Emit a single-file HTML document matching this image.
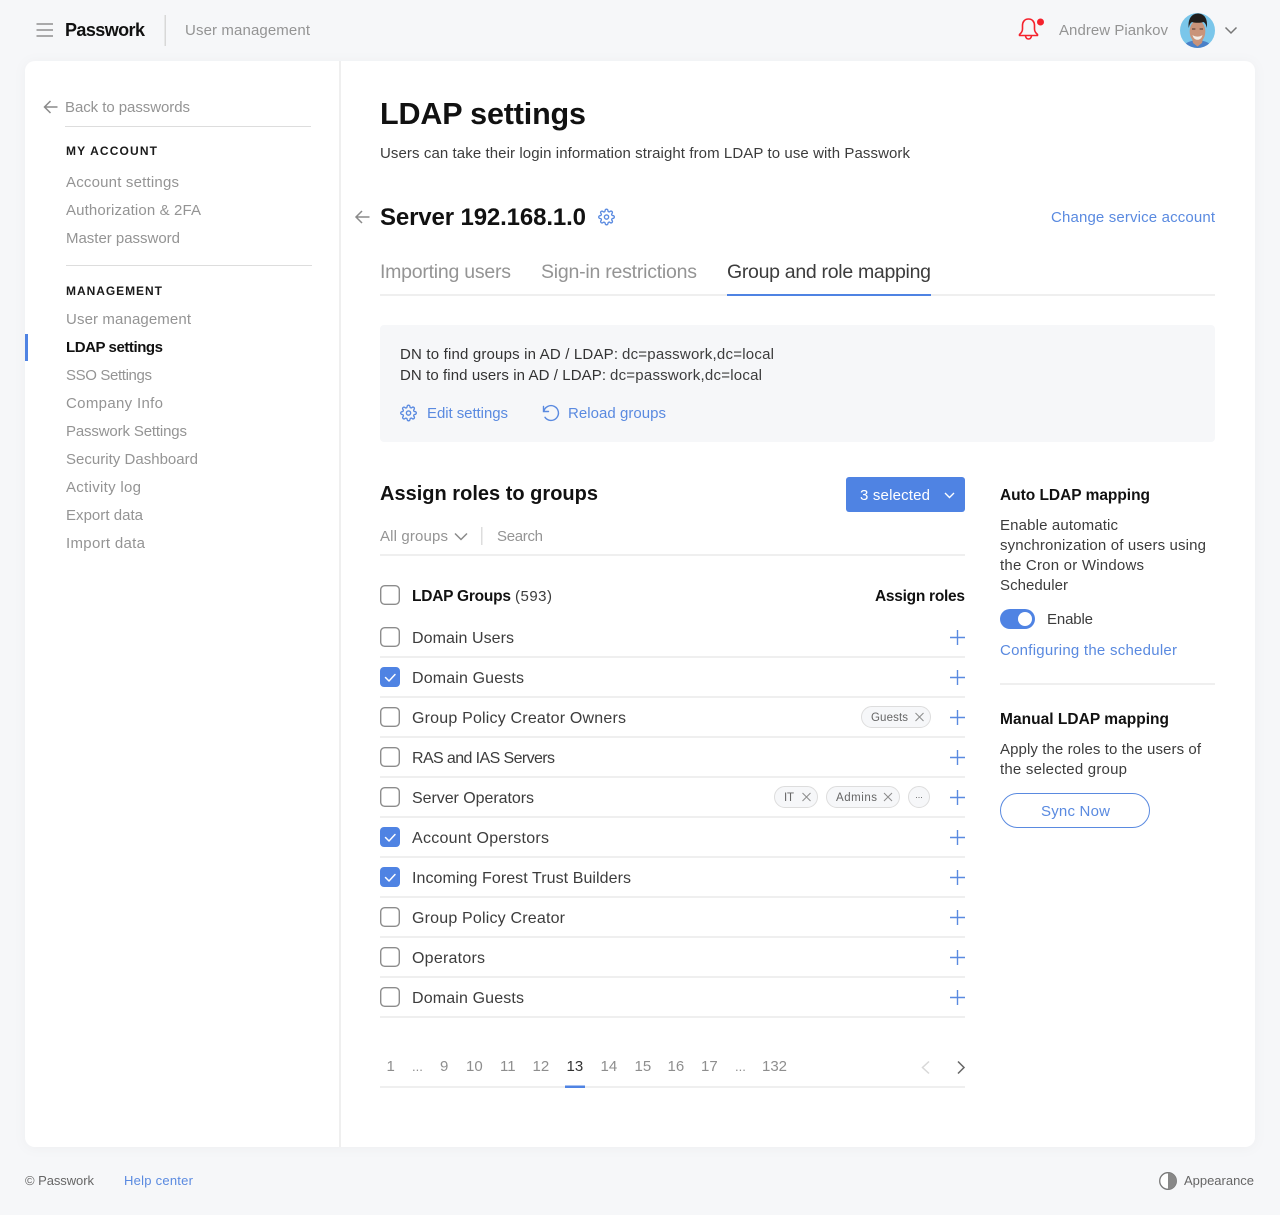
<!DOCTYPE html>
<html lang="en"><head><meta charset="utf-8"><title>LDAP settings</title>
<style>
html,body{margin:0;padding:0;background:#f6f7f9;width:1280px;height:1215px;overflow:hidden}
svg{display:block}
text{font-family:"Liberation Sans",sans-serif;font-size:15px;fill:#333;white-space:pre}
.g{fill:#949494}
.d{fill:#3c3c3c}
.r{fill:#3c3c3c;font-size:16px}
.b{fill:#5a8ae0}
.k{fill:#111;font-weight:700}
.h{fill:#1a1a1a;font-weight:700;font-size:12px}
.p{font-size:15px;fill:#8e8e8e}
.e{font-size:13px;fill:#8e8e8e}
.t{font-size:19.5px;fill:#949494}
.line{fill:#efefef}
.ic{fill:none;stroke:#5a8ae0;stroke-width:1.9;stroke-linecap:round;stroke-linejoin:round}
.plus{stroke:#5a8ae0;stroke-width:1.4;fill:none}
.cb{fill:#fff;stroke:#8c8c8c;stroke-width:1.4}
.cc{fill:#4f83e3}
.ck{fill:none;stroke:#fff;stroke-width:1.5;stroke-linecap:round;stroke-linejoin:round}
.chip{fill:#f6f7f9;stroke:#ddd;stroke-width:1}
.x{stroke:#8c8c8c;stroke-width:1;fill:none}
.c{font-size:11.5px;fill:#666}
</style></head><body>
<svg width="1280" height="1215" viewBox="0 0 1280 1215" xmlns="http://www.w3.org/2000/svg">
<defs>
<filter id="sh" x="-5%" y="-5%" width="110%" height="110%"><feDropShadow dx="0" dy="1" stdDeviation="6" flood-color="#000" flood-opacity=".035"/></filter>
<path id="gear" d="M19.4 15a1.65 1.65 0 0 0 .33 1.82l.06.06a2 2 0 0 1 0 2.83 2 2 0 0 1-2.83 0l-.06-.06a1.65 1.65 0 0 0-1.82-.33 1.65 1.65 0 0 0-1 1.51V21a2 2 0 0 1-2 2 2 2 0 0 1-2-2v-.09A1.65 1.65 0 0 0 9 19.4a1.65 1.65 0 0 0-1.82.33l-.06.06a2 2 0 0 1-2.83 0 2 2 0 0 1 0-2.83l.06-.06a1.65 1.65 0 0 0 .33-1.82 1.65 1.65 0 0 0-1.51-1H3a2 2 0 0 1-2-2 2 2 0 0 1 2-2h.09A1.65 1.65 0 0 0 4.6 9a1.65 1.65 0 0 0-.33-1.82l-.06-.06a2 2 0 0 1 0-2.83 2 2 0 0 1 2.83 0l.06.06a1.65 1.65 0 0 0 1.82.33H9a1.65 1.65 0 0 0 1-1.51V3a2 2 0 0 1 2-2 2 2 0 0 1 2 2v.09a1.65 1.65 0 0 0 1 1.51 1.65 1.65 0 0 0 1.82-.33l.06-.06a2 2 0 0 1 2.83 0 2 2 0 0 1 0 2.83l-.06.06a1.65 1.65 0 0 0-.33 1.82V9a1.65 1.65 0 0 0 1.51 1H21a2 2 0 0 1 2 2 2 2 0 0 1-2 2h-.09a1.65 1.65 0 0 0-1.51 1z"/>
<clipPath id="av"><circle cx="1197.5" cy="30.5" r="17.5"/></clipPath>
</defs>

<rect width="1280" height="1215" fill="#f6f7f9"/>

<!-- top bar -->
<g stroke="#8f8f8f" stroke-width="1.5" fill="none"><path d="M36.500 24H53M36.500 30H53M36.500 36H53"/></g>
<text x="65" y="36" style="font-size:18px;fill:#111;font-weight:700" textLength="80" lengthAdjust="spacing">Passwork</text>
<rect x="164.500" y="15" width="1.500" height="31" fill="#d8d8d8"/>
<text x="185" y="35" class="g" textLength="125" lengthAdjust="spacing">User management</text>
<path d="M1028.500 19.500c-4 0-6 3-6 6.500v3.500c0 2.500-1.200 4-3 5.500v1h18v-1c-1.800-1.500-3-3-3-5.500V26c0-3.500-2-6.500-6-6.500zM1025.500 36.500c.4 2 1.500 3 3 3s2.600-1 3-3" transform="translate(0 -.5)" fill="none" stroke="#f5222d" stroke-width="1.600" stroke-linejoin="round"/>
<circle cx="1040.500" cy="22" r="3.500" fill="#f5222d"/>
<text x="1059" y="35" class="g" textLength="109" lengthAdjust="spacing">Andrew Piankov</text>
<g clip-path="url(#av)">
<rect x="1178" y="11" width="40" height="40" fill="#7ac6ea"/>
<path d="M1183 49c1-6 6-8.500 14.500-8.500s13.500 2.500 14.500 8.500z" fill="#4a80c8"/>
<path d="M1192 38h11l-1 5-4.500 3.500-4.500-3.500z" fill="#c99278"/>
<ellipse cx="1197.500" cy="31.500" rx="7.800" ry="11" fill="#c9947a"/>
<path d="M1188.800 28c-1.300-9 3-14.500 9-14.500s10.300 4.500 9 14.500c-.6-3-1.500-5-3.300-6-3.500 1-8 1-11.500 0-1.800 1-2.800 3-3.200 6z" fill="#211e1c"/>
<path d="M1192.500 35c3 2.200 7 2.200 10 0-.7 3.300-2.800 4.800-5 4.800s-4.300-1.500-5-4.800z" fill="#f4eee8"/>
<path d="M1192 29h3.400M1199.600 29h3.400" stroke="#4a352b" stroke-width="1"/>
</g>
<path d="M1225.500 27.500l5.500 5.500 5.500-5.500" fill="none" stroke="#777" stroke-width="1.500"/>

<!-- card -->
<rect x="25" y="61" width="1230" height="1086" rx="10" fill="#fff" filter="url(#sh)"/>
<rect x="339" y="61" width="2" height="1086" fill="#efefef"/>

<!-- sidebar -->
<path d="M57.500 107H45M50.500 101l-6 6 6 6" fill="none" stroke="#8a8a8a" stroke-width="1.500"/>
<text x="65" y="112" class="g" textLength="125" lengthAdjust="spacing">Back to passwords</text>
<rect x="65" y="126" width="246" height="1" fill="#ddd"/>
<text x="66" y="155" class="h" textLength="91" lengthAdjust="spacing">MY ACCOUNT</text>
<text x="66" y="187" class="g" textLength="113" lengthAdjust="spacing">Account settings</text>
<text x="66" y="215" class="g" textLength="135" lengthAdjust="spacing">Authorization &amp; 2FA</text>
<text x="66" y="243" class="g" textLength="114" lengthAdjust="spacing">Master password</text>
<rect x="66" y="265" width="246" height="1" fill="#ddd"/>
<text x="66" y="295" class="h" textLength="96" lengthAdjust="spacing">MANAGEMENT</text>
<text x="66" y="324" class="g" textLength="125" lengthAdjust="spacing">User management</text>
<rect x="25" y="334" width="3" height="27" fill="#4f83e3"/>
<text x="66" y="352" class="k" textLength="97" lengthAdjust="spacing">LDAP settings</text>
<text x="66" y="380" class="g" textLength="86" lengthAdjust="spacing">SSO Settings</text>
<text x="66" y="408" class="g" textLength="97" lengthAdjust="spacing">Company Info</text>
<text x="66" y="436" class="g" textLength="121" lengthAdjust="spacing">Passwork Settings</text>
<text x="66" y="464" class="g" textLength="132" lengthAdjust="spacing">Security Dashboard</text>
<text x="66" y="492" class="g" textLength="75" lengthAdjust="spacing">Activity log</text>
<text x="66" y="520" class="g" textLength="77" lengthAdjust="spacing">Export data</text>
<text x="66" y="548" class="g" textLength="79" lengthAdjust="spacing">Import data</text>

<!-- heading -->
<text x="380" y="124" style="font-size:30.500px;fill:#111;font-weight:700" textLength="206" lengthAdjust="spacing">LDAP settings</text>
<text x="380" y="158" class="d" textLength="530" lengthAdjust="spacing">Users can take their login information straight from LDAP to use with Passwork</text>
<path d="M369.500 217H356M362 211l-6 6 6 6" fill="none" stroke="#8a8a8a" stroke-width="1.500"/>
<text x="380" y="225" style="font-size:24px;fill:#111;font-weight:700" textLength="206" lengthAdjust="spacing">Server 192.168.1.0</text>
<g transform="translate(598 208.500) scale(.71)"><use href="#gear" class="ic"/><circle cx="12" cy="12" r="3" class="ic"/></g>
<text x="1051" y="222" class="b" textLength="164" lengthAdjust="spacing">Change service account</text>

<!-- tabs -->
<text x="380" y="278" class="t" textLength="131" lengthAdjust="spacing">Importing users</text>
<text x="541" y="278" class="t" textLength="156" lengthAdjust="spacing">Sign-in restrictions</text>
<text x="727" y="278" class="t" style="fill:#3c3c3c" textLength="204" lengthAdjust="spacing">Group and role mapping</text>
<rect x="380" y="294" width="835" height="2" class="line"/>
<rect x="727" y="294" width="204" height="2" fill="#4f83e3"/>

<!-- info panel -->
<rect x="380" y="325" width="835" height="117" rx="4" fill="#f6f7f9"/>
<text x="400" y="359" style="fill:#333" textLength="218" lengthAdjust="spacing">DN to find groups in AD / LDAP:</text>
<text x="622" y="359" class="d" textLength="152" lengthAdjust="spacing">dc=passwork,dc=local</text>
<text x="400" y="380" style="fill:#333" textLength="206" lengthAdjust="spacing">DN to find users in AD / LDAP:</text>
<text x="610" y="380" class="d" textLength="152" lengthAdjust="spacing">dc=passwork,dc=local</text>
<g transform="translate(400 404.500) scale(.71)"><use href="#gear" class="ic"/><circle cx="12" cy="12" r="3" class="ic"/></g>
<text x="427" y="418" class="b" textLength="81" lengthAdjust="spacing">Edit settings</text>
<path d="M543.500 406v5h5M543.800 411a7.400 7.400 0 1 1 1.200 5.800" transform="translate(0 .5)" fill="none" stroke="#5a8ae0" stroke-width="1.400" stroke-linecap="round"/>
<text x="568" y="418" class="b" textLength="98" lengthAdjust="spacing">Reload groups</text>

<!-- assign -->
<text x="380" y="500" style="font-size:20px;fill:#111;font-weight:700" textLength="218" lengthAdjust="spacing">Assign roles to groups</text>
<rect x="846" y="477" width="119" height="35" rx="3" fill="#4f83e3"/>
<text x="860" y="500" style="fill:#fff" textLength="70" lengthAdjust="spacing">3 selected</text>
<path d="M945 493l4.500 4.500 4.500-4.500" fill="none" stroke="#fff" stroke-width="1.400"/>
<text x="380" y="541" class="g" textLength="68" lengthAdjust="spacing">All groups</text>
<path d="M455 533.500l6 6 6-6" fill="none" stroke="#8a8a8a" stroke-width="1.500"/>
<rect x="481" y="527" width="1.500" height="18" fill="#ddd"/>
<text x="497" y="541" class="g" textLength="46" lengthAdjust="spacing">Search</text>
<rect x="380" y="554" width="585" height="2" class="line"/>

<rect x="380.700" y="585.700" width="18.600" height="18.600" rx="4" class="cb"/>
<text x="412" y="601" class="k" style="font-size:15.500px" textLength="99" lengthAdjust="spacing">LDAP Groups</text>
<text x="515" y="601" class="d" textLength="37" lengthAdjust="spacing">(593)</text>
<text x="875" y="601" class="k" style="font-size:15.500px" textLength="90" lengthAdjust="spacing">Assign roles</text>

<!-- rows -->
<rect x="380.700" y="627.700" width="18.600" height="18.600" rx="4" class="cb"/>
<text x="412" y="643" class="r" textLength="102" lengthAdjust="spacing">Domain Users</text>
<path class="plus" d="M950 637.500h15M957.500 630v15"/><rect x="380" y="656" width="585" height="2" class="line"/>

<rect x="380" y="667" width="20" height="20" rx="4" class="cc"/><path class="ck" d="M385.500 677.500l3.500 3.500 6-6.500"/>
<text x="412" y="683" class="r" textLength="112" lengthAdjust="spacing">Domain Guests</text>
<path class="plus" d="M950 677.500h15M957.500 670v15"/><rect x="380" y="696" width="585" height="2" class="line"/>

<rect x="380.700" y="707.700" width="18.600" height="18.600" rx="4" class="cb"/>
<text x="412" y="723" class="r" textLength="214" lengthAdjust="spacing">Group Policy Creator Owners</text>
<rect x="861.500" y="706.500" width="69" height="21" rx="10.500" class="chip"/>
<text x="871" y="721" class="c" textLength="37" lengthAdjust="spacing">Guests</text>
<path class="x" d="M915.500 713l8 8M923.500 713l-8 8"/>
<path class="plus" d="M950 717.500h15M957.500 710v15"/><rect x="380" y="736" width="585" height="2" class="line"/>

<rect x="380.700" y="747.700" width="18.600" height="18.600" rx="4" class="cb"/>
<text x="412" y="763" class="r" textLength="143" lengthAdjust="spacing">RAS and IAS Servers</text>
<path class="plus" d="M950 757.500h15M957.500 750v15"/><rect x="380" y="776" width="585" height="2" class="line"/>

<rect x="380.700" y="787.700" width="18.600" height="18.600" rx="4" class="cb"/>
<text x="412" y="803" class="r" textLength="122" lengthAdjust="spacing">Server Operators</text>
<rect x="774.500" y="786.500" width="43" height="21" rx="10.500" class="chip"/>
<text x="784" y="801" class="c" textLength="10" lengthAdjust="spacing">IT</text>
<path class="x" d="M802.500 793l8 8M810.500 793l-8 8"/>
<rect x="826.500" y="786.500" width="73" height="21" rx="10.500" class="chip"/>
<text x="836" y="801" class="c" textLength="41" lengthAdjust="spacing">Admins</text>
<path class="x" d="M884 793l8 8M892 793l-8 8"/>
<rect x="908.500" y="786.500" width="21" height="21" rx="10.500" class="chip"/>
<path d="M916 797.500h1M918.500 797.500h1M921 797.500h1" stroke="#777" stroke-width="1" fill="none"/>
<path class="plus" d="M950 797.500h15M957.500 790v15"/><rect x="380" y="816" width="585" height="2" class="line"/>

<rect x="380" y="827" width="20" height="20" rx="4" class="cc"/><path class="ck" d="M385.500 837.500l3.500 3.500 6-6.500"/>
<text x="412" y="843" class="r" textLength="137" lengthAdjust="spacing">Account Operstors</text>
<path class="plus" d="M950 837.500h15M957.500 830v15"/><rect x="380" y="856" width="585" height="2" class="line"/>

<rect x="380" y="867" width="20" height="20" rx="4" class="cc"/><path class="ck" d="M385.500 877.500l3.500 3.500 6-6.500"/>
<text x="412" y="883" class="r" textLength="219" lengthAdjust="spacing">Incoming Forest Trust Builders</text>
<path class="plus" d="M950 877.500h15M957.500 870v15"/><rect x="380" y="896" width="585" height="2" class="line"/>

<rect x="380.700" y="907.700" width="18.600" height="18.600" rx="4" class="cb"/>
<text x="412" y="923" class="r" textLength="153" lengthAdjust="spacing">Group Policy Creator</text>
<path class="plus" d="M950 917.500h15M957.500 910v15"/><rect x="380" y="936" width="585" height="2" class="line"/>

<rect x="380.700" y="947.700" width="18.600" height="18.600" rx="4" class="cb"/>
<text x="412" y="963" class="r" textLength="73" lengthAdjust="spacing">Operators</text>
<path class="plus" d="M950 957.500h15M957.500 950v15"/><rect x="380" y="976" width="585" height="2" class="line"/>

<rect x="380.700" y="987.700" width="18.600" height="18.600" rx="4" class="cb"/>
<text x="412" y="1003" class="r" textLength="112" lengthAdjust="spacing">Domain Guests</text>
<path class="plus" d="M950 997.500h15M957.500 990v15"/><rect x="380" y="1016" width="585" height="2" class="line"/>

<!-- pagination -->
<text x="386.500" y="1071" class="p">1</text>
<text x="412" y="1071" class="e">...</text>
<text x="440" y="1071" class="p">9</text>
<text x="466" y="1071" class="p">10</text>
<text x="500" y="1071" class="p">11</text>
<text x="532.500" y="1071" class="p">12</text>
<text x="566.500" y="1071" class="p" style="fill:#333">13</text>
<text x="600.500" y="1071" class="p">14</text>
<text x="634.500" y="1071" class="p">15</text>
<text x="667.500" y="1071" class="p">16</text>
<text x="701" y="1071" class="p">17</text>
<text x="735" y="1071" class="e">...</text>
<text x="762" y="1071" class="p" textLength="25" lengthAdjust="spacing">132</text>
<path d="M929 1061.500l-6.500 6 6.500 6" fill="none" stroke="#d8d8d8" stroke-width="1.500"/>
<path d="M958 1061.500l6 6-6 6" fill="none" stroke="#666" stroke-width="1.500"/>
<rect x="380" y="1086" width="585" height="2" class="line"/>
<rect x="565" y="1085.500" width="20" height="2.500" fill="#4f83e3"/>

<!-- right column -->
<text x="1000" y="500" class="k" style="font-size:15.500px" textLength="150" lengthAdjust="spacing">Auto LDAP mapping</text>
<text x="1000" y="530" class="d" textLength="118" lengthAdjust="spacing">Enable automatic</text>
<text x="1000" y="550" class="d" textLength="206" lengthAdjust="spacing">synchronization of users using</text>
<text x="1000" y="570" class="d" textLength="144" lengthAdjust="spacing">the Cron or Windows</text>
<text x="1000" y="590" class="d" textLength="68" lengthAdjust="spacing">Scheduler</text>
<rect x="1000" y="609" width="35" height="20" rx="10" fill="#4f83e3"/>
<circle cx="1025" cy="619" r="7" fill="#fff"/>
<text x="1047" y="624" class="d" textLength="46" lengthAdjust="spacing">Enable</text>
<text x="1000" y="655" class="b" textLength="177" lengthAdjust="spacing">Configuring the scheduler</text>
<rect x="1000" y="683" width="215" height="2" class="line"/>
<text x="1000" y="724" class="k" style="font-size:15.500px" textLength="169" lengthAdjust="spacing">Manual LDAP mapping</text>
<text x="1000" y="754" class="d" textLength="201" lengthAdjust="spacing">Apply the roles to the users of</text>
<text x="1000" y="774" class="d" textLength="127" lengthAdjust="spacing">the selected group</text>
<rect x="1000.500" y="793.500" width="149" height="34" rx="17" fill="#fff" stroke="#5a8ae0" stroke-width="1"/>
<text x="1041" y="816" class="b" textLength="69" lengthAdjust="spacing">Sync Now</text>

<!-- footer -->
<text x="25" y="1185" style="font-size:13px;fill:#666" textLength="69" lengthAdjust="spacing">© Passwork</text>
<text x="124" y="1185" style="font-size:13px;fill:#5a8ae0" textLength="69" lengthAdjust="spacing">Help center</text>
<circle cx="1168" cy="1181" r="8.300" fill="#fff" stroke="#777" stroke-width="1.300"/>
<path d="M1168 1172.700a8.300 8.300 0 0 1 0 16.600z" fill="#888"/>
<text x="1184" y="1185" style="font-size:13px;fill:#666" textLength="70" lengthAdjust="spacing">Appearance</text>
</svg>
</body></html>
